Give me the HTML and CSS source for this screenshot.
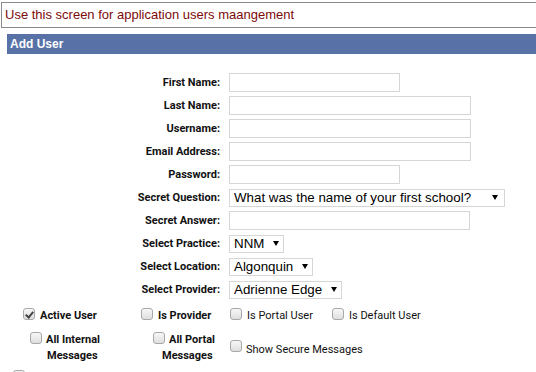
FILE: index.html
```html
<!DOCTYPE html>
<html>
<head>
<meta charset="utf-8">
<link rel="stylesheet" href="styles.css">
</head>
<body>
<div class="notice">Use this screen for application users maangement</div>
<div class="bar">Add User</div>
<div class="form">
  <div class="lbl">First Name:</div><div class="field"><span class="in w171"></span></div>
  <div class="lbl">Last Name:</div><div class="field"><span class="in w242"></span></div>
  <div class="lbl">Username:</div><div class="field"><span class="in w242"></span></div>
  <div class="lbl">Email Address:</div><div class="field"><span class="in w242"></span></div>
  <div class="lbl">Password:</div><div class="field"><span class="in w171"></span></div>
  <div class="lbl">Secret Question:</div><div class="field"><span class="sel w276"><span>What was the name of your first school?</span><span class="arr"></span></span></div>
  <div class="lbl">Secret Answer:</div><div class="field"><span class="in w241"></span></div>
  <div class="lbl">Select Practice:</div><div class="field"><span class="sel w55"><span>NNM</span><span class="arr"></span></span></div>
  <div class="lbl">Select Location:</div><div class="field"><span class="sel w84"><span>Algonquin</span><span class="arr"></span></span></div>
  <div class="lbl">Select Provider:</div><div class="field"><span class="sel w113"><span>Adrienne Edge</span><span class="arr"></span></span></div>
</div>
<div class="opts">
  <div class="opt c1a b"><span class="cb checked"></span>Active User</div>
  <div class="opt c2a b"><span class="cb"></span>Is Provider</div>
  <div class="opt c3a"><span class="cb"></span>Is Portal User</div>
  <div class="opt c4a"><span class="cb"></span>Is Default User</div>

  <div class="multi c1b b">
    <div class="opt l1"><span class="cb"></span>All Internal</div>
    <div class="l2">Messages</div>
  </div>
  <div class="multi c2b b">
    <div class="opt l1"><span class="cb"></span>All Portal</div>
    <div class="l2">Messages</div>
  </div>
  <div class="opt c3b"><span class="cb"></span>Show Secure Messages</div>
  <div></div>

  <div class="opt c1c"><span class="cb"></span></div>
</div>
</body>
</html>
```
FILE: styles.css
```css
* { box-sizing: border-box; }
html, body { margin: 0; padding: 0; background: #fff; }
body {
  width: 536px;
  height: 372px;
  overflow: hidden;
  font-family: Roboto, "Liberation Sans", sans-serif;
}
.notice {
  margin: 2px -20px 0 1px;
  height: 26px;
  border: 1px solid #8a8a8a;
  padding: 0 3px;
  line-height: 24px;
  font-family: "Liberation Sans", Arial, sans-serif;
  font-size: 13px;
  color: #7d0a0a;
  white-space: nowrap;
}
.bar {
  margin: 6px 0 0 7px;
  height: 20px;
  line-height: 20px;
  padding-left: 3px;
  background: #5872a7;
  color: #fff;
  font-family: "Liberation Sans", Arial, sans-serif;
  font-weight: bold;
  font-size: 12px;
}
.form {
  margin-top: 19px;
  display: grid;
  grid-template-columns: 220px auto;
  grid-auto-rows: 19px;
  column-gap: 9px;
  row-gap: 4px;
}
.lbl {
  text-align: right;
  font-weight: bold;
  font-size: 11px;
  color: #111;
  align-self: center;
  white-space: nowrap;
}
.field { display: flex; align-items: center; }
.in {
  display: block;
  height: 19px;
  border: 1px solid #d6d6d6;
  background: #fff;
}
.sel {
  display: flex;
  align-items: center;
  justify-content: space-between;
  height: 18px;
  border: 1px solid #d6d6d6;
  background: #fff;
  padding: 0 6px 0 4px;
  font-family: "Liberation Sans", Arial, sans-serif;
  font-size: 13.33px;
  color: #000;
  white-space: nowrap;
}
.arr {
  width: 0; height: 0;
  border-left: 3px solid transparent;
  border-right: 3px solid transparent;
  border-top: 5px solid #000;
  margin-left: 9px;
}
.w171 { width: 171px; }
.w242 { width: 242px; }
.w241 { width: 241px; }
.w276 { width: 276px; }
.w55 { width: 55px; }
.w84 { width: 84px; }
.w113 { width: 113px; }

.opts {
  margin-top: 9px;
  display: grid;
  grid-template-columns: 141px 89px 102px 1fr;
  row-gap: 8px;
  font-size: 11px;
  line-height: 16px;
  color: #111;
}
.b { font-weight: bold; }
.opt { display: flex; align-items: flex-start; white-space: nowrap; }
.cb {
  flex: none;
  width: 12px;
  height: 12px;
  margin-top: 0;
  margin-right: 5px;
  border: 1px solid #a8a8a8;
  border-radius: 3px;
  background: linear-gradient(#f7f7f7, #dedede);
  position: relative;
}
.cb.checked::after {
  content: "";
  position: absolute;
  left: 3px;
  top: 1px;
  width: 3px;
  height: 6px;
  border-right: 2px solid #444;
  border-bottom: 2px solid #444;
  transform: rotate(40deg);
}
.c1a { padding-left: 23px; }
.c3b { align-self: center; margin-top: 4px; }
.c3b .cb { margin-top: -2px; margin-right: 4px; }
.c1b { padding-left: 30px; }
.c1b .l2 { padding-left: 17px; }
.c2b { padding-left: 12px; }
.c2b .l2 { padding-left: 9px; }
.multi .cb { margin-right: 4px; }
.c1c { padding-left: 13px; margin-top: -2px; }
```
